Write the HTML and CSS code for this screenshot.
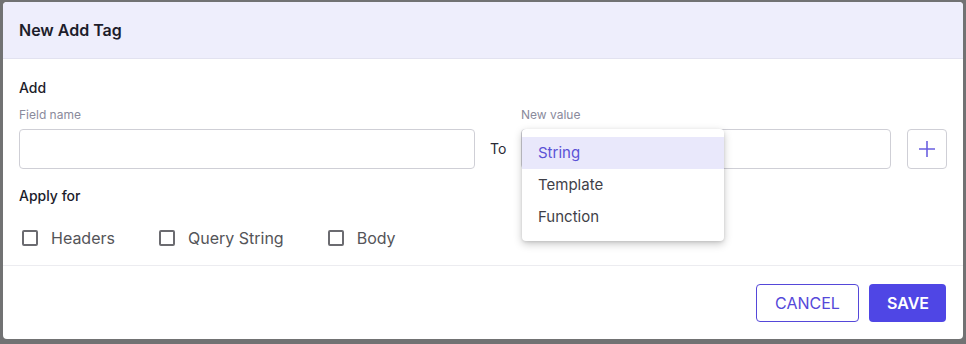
FILE: index.html
```
<!DOCTYPE html>
<html lang="en">
<head>
  <meta charset="UTF-8">
  <title>New Add Tag</title>
  <link rel="stylesheet" href="styles.css">
</head>
<body>
  <div class="backdrop">
    <div class="dialog">
      <div class="dialog-header">New Add Tag</div>

      <div class="dialog-body">
        <div class="section-title">Add</div>

        <div class="field-row">
          <div class="field">
            <label class="field-label">Field name</label>
            <input class="text-input" type="text">
          </div>
          <div class="to-label">To</div>
          <div class="field">
            <label class="field-label">New value</label>
            <div class="value-wrap">
              <input class="text-input" type="text">
              <ul class="menu">
                <li class="menu-item active">String</li>
                <li class="menu-item">Template</li>
                <li class="menu-item">Function</li>
              </ul>
            </div>
          </div>
          <button class="add-btn" type="button">
            <svg width="18" height="18" viewBox="0 0 18 18">
              <path d="M9 1v16M1 9h16" stroke="#6a5fe0" stroke-width="1.6" fill="none"/>
            </svg>
          </button>
        </div>

        <div class="section-title apply">Apply for</div>

        <div class="checks">
          <label class="check"><span class="box"></span>Headers</label>
          <label class="check"><span class="box"></span>Query String</label>
          <label class="check"><span class="box"></span>Body</label>
        </div>
      </div>

      <div class="dialog-footer">
        <button class="btn btn-outline" type="button">CANCEL</button>
        <button class="btn btn-primary" type="button">SAVE</button>
      </div>
    </div>
  </div>
</body>
</html>
```

FILE: styles.css
```
* {
  box-sizing: border-box;
}
body {
  margin: 0;
  font-family: Inter, "Noto Sans", sans-serif;
  background: #717273;
}
.backdrop {
  width: 966px;
  height: 344px;
  padding: 2px 3px 5px 3px;
}
.dialog {
  background: #fff;
  border-radius: 4px;
  height: 337px;
  display: flex;
  flex-direction: column;
  overflow: hidden;
}
.dialog-header {
  height: 57px;
  background: #eeeefc;
  border-bottom: 1px solid #e2e2f0;
  padding: 0 16px;
  display: flex;
  align-items: center;
  font-size: 16px;
  font-weight: 600;
  color: #1d1d2b;
}
.dialog-body {
  padding: 19px 16px 15px;
  border-bottom: 1px solid #ececf0;
}
.section-title {
  font-size: 14px;
  line-height: 20px;
  font-weight: 500;
  color: #1d1d2b;
}
.section-title.apply {
  margin-top: 17px;
}
.field-row {
  display: grid;
  grid-template-columns: 456px 46px 1fr 40px;
  align-items: end;
  margin-top: 9px;
}
.field-label {
  display: block;
  font-size: 12px;
  line-height: 16px;
  color: #8a8a9c;
  margin-bottom: 6px;
}
.text-input {
  display: block;
  width: 100%;
  height: 40px;
  border: 1px solid #cfcfd6;
  border-radius: 4px;
  font: inherit;
  padding: 0 12px;
}
.to-label {
  height: 40px;
  line-height: 40px;
  padding-left: 15px;
  font-size: 14px;
  color: #2a2a35;
}
.value-wrap {
  position: relative;
  margin-right: 16px;
}
.menu {
  position: absolute;
  top: 0;
  left: 1px;
  width: 202px;
  margin: 0;
  padding: 8px 0;
  list-style: none;
  background: #fff;
  border-radius: 4px;
  box-shadow: 0 3px 8px rgba(0, 0, 0, 0.22), 0 1px 3px rgba(0, 0, 0, 0.1);
}
.menu-item {
  height: 32px;
  line-height: 32px;
  padding-left: 16px;
  font-size: 15px;
  color: #3f3f48;
}
.menu-item.active {
  background: #e9e8fb;
  color: #5b52d6;
}
.add-btn {
  width: 40px;
  height: 40px;
  border: 1px solid #cfcfd6;
  border-radius: 4px;
  background: #fff;
  display: flex;
  align-items: center;
  justify-content: center;
  padding: 0;
}
.checks {
  display: flex;
  margin-top: 20px;
  height: 24px;
  align-items: center;
}
.check {
  display: flex;
  align-items: center;
  font-size: 16px;
  color: #545458;
  margin-right: 41px;
  padding-left: 3px;
}
.box {
  width: 16px;
  height: 16px;
  border: 2px solid #6b6b70;
  border-radius: 2px;
  margin-right: 13px;
}
.dialog-footer {
  flex: 1;
  display: flex;
  justify-content: flex-end;
  align-items: center;
  padding: 0 17px 0 0;
  gap: 10px;
}
.btn {
  height: 38px;
  border-radius: 4px;
  font-family: Inter, "Noto Sans", sans-serif;
  font-size: 16px;
  padding: 0 18px;
}
.btn-outline {
  width: 103px;
  background: #fff;
  color: #5548d9;
  border: 1px solid #5548d9;
}
.btn-primary {
  width: 77px;
  background: #4f46e5;
  color: #fff;
  border: none;
  font-weight: 600;
}
```
